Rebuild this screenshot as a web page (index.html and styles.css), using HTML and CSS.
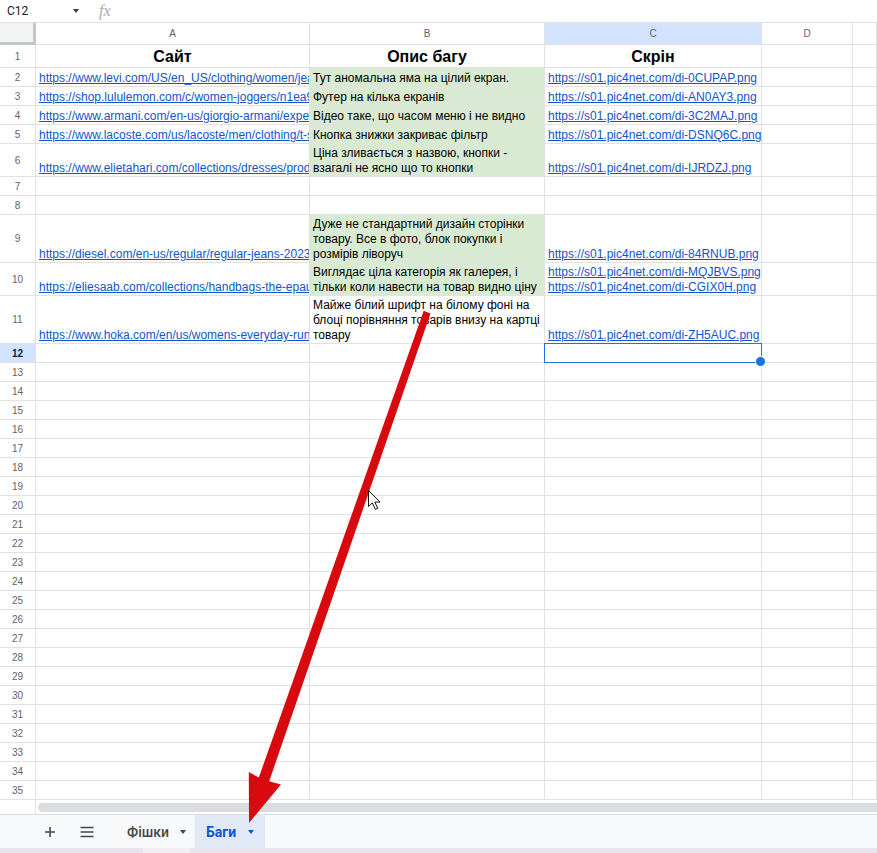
FILE: index.html
```html
<!DOCTYPE html>
<html lang="uk">
  <head>
    <meta charset="UTF-8" />
    <title>Баги — таблиця</title>
    <link rel="stylesheet" href="styles.css">
  </head>
  <body>
    <div class="app">
      <div class="toolbar">
        <div class="namebox">C12</div>
        <span class="caret dark"></span>
        <span class="fx">fx</span>
      </div>

      <div class="sheet">
        <div class="row hdr">
          <div class="corner"></div>
          <div class="ch">A</div>
          <div class="ch">B</div>
          <div class="ch active">C</div>
          <div class="ch">D</div>
          <div class="ch"></div>
        </div>
        <div class="row r1">
          <div class="rh">1</div>
          <div class="cell title">Сайт</div>
          <div class="cell title">Опис багу</div>
          <div class="cell title">Скрін</div>
          <div class="cell"></div>
          <div class="cell"></div>
        </div>
        <div class="row">
          <div class="rh">2</div>
          <div class="cell clip"><a href="#">https://www.levi.com/US/en_US/clothing/women/jeans/straight/ribcage-straight-ankle-womens-jeans</a></div>
          <div class="cell wrap green">Тут аномальна яма на цілий екран.</div>
          <div class="cell"><a href="#">https://s01.pic4net.com/di-0CUPAP.png</a></div>
          <div class="cell"></div>
          <div class="cell"></div>
        </div>
        <div class="row">
          <div class="rh">3</div>
          <div class="cell clip"><a href="#">https://shop.lululemon.com/c/women-joggers/n1ea9n</a></div>
          <div class="cell wrap green">Футер на кілька екранів</div>
          <div class="cell"><a href="#">https://s01.pic4net.com/di-AN0AY3.png</a></div>
          <div class="cell"></div>
          <div class="cell"></div>
        </div>
        <div class="row">
          <div class="rh">4</div>
          <div class="cell clip"><a href="#">https://www.armani.com/en-us/giorgio-armani/experience</a></div>
          <div class="cell wrap green">Відео таке, що часом меню і не видно</div>
          <div class="cell"><a href="#">https://s01.pic4net.com/di-3C2MAJ.png</a></div>
          <div class="cell"></div>
          <div class="cell"></div>
        </div>
        <div class="row">
          <div class="rh">5</div>
          <div class="cell clip"><a href="#">https://www.lacoste.com/us/lacoste/men/clothing/t-shirts/</a></div>
          <div class="cell wrap green">Кнопка знижки закриває фільтр</div>
          <div class="cell"><a href="#">https://s01.pic4net.com/di-DSNQ6C.png</a></div>
          <div class="cell"></div>
          <div class="cell"></div>
        </div>
        <div class="row h33">
          <div class="rh">6</div>
          <div class="cell clip"><a href="#">https://www.elietahari.com/collections/dresses/products/</a></div>
          <div class="cell wrap green">Ціна зливається з назвою, кнопки - взагалі не ясно що то кнопки</div>
          <div class="cell"><a href="#">https://s01.pic4net.com/di-IJRDZJ.png</a></div>
          <div class="cell"></div>
          <div class="cell"></div>
        </div>
        <div class="row">
          <div class="rh">7</div>
          <div class="cell"></div><div class="cell"></div><div class="cell"></div><div class="cell"></div><div class="cell"></div>
        </div>
        <div class="row">
          <div class="rh">8</div>
          <div class="cell"></div><div class="cell"></div><div class="cell"></div><div class="cell"></div><div class="cell"></div>
        </div>
        <div class="row h48">
          <div class="rh">9</div>
          <div class="cell clip"><a href="#">https://diesel.com/en-us/regular/regular-jeans-2023-d-finitive</a></div>
          <div class="cell wrap green">Дуже не стандартний дизайн сторінки товару. Все в фото, блок покупки і розмірів ліворуч</div>
          <div class="cell"><a href="#">https://s01.pic4net.com/di-84RNUB.png</a></div>
          <div class="cell"></div>
          <div class="cell"></div>
        </div>
        <div class="row h33">
          <div class="rh">10</div>
          <div class="cell clip"><a href="#">https://eliesaab.com/collections/handbags-the-epaulette</a></div>
          <div class="cell wrap green">Виглядає ціла категорія як галерея, і тільки коли навести на товар видно ціну</div>
          <div class="cell"><a href="#">https://s01.pic4net.com/di-MQJBVS.png</a><a href="#">https://s01.pic4net.com/di-CGIX0H.png</a></div>
          <div class="cell"></div>
          <div class="cell"></div>
        </div>
        <div class="row h48">
          <div class="rh">11</div>
          <div class="cell clip"><a href="#">https://www.hoka.com/en/us/womens-everyday-running-shoes/</a></div>
          <div class="cell wrap">Майже білий шрифт на білому фоні на блоці порівняння товарів внизу на картці товару</div>
          <div class="cell"><a href="#">https://s01.pic4net.com/di-ZH5AUC.png</a></div>
          <div class="cell"></div>
          <div class="cell"></div>
        </div>
        <div class="row">
          <div class="rh active">12</div>
          <div class="cell"></div><div class="cell"></div><div class="cell selected"></div><div class="cell"></div><div class="cell"></div>
        </div>
        <div class="row"><div class="rh">13</div><div class="cell"></div><div class="cell"></div><div class="cell"></div><div class="cell"></div><div class="cell"></div></div>
        <div class="row"><div class="rh">14</div><div class="cell"></div><div class="cell"></div><div class="cell"></div><div class="cell"></div><div class="cell"></div></div>
        <div class="row"><div class="rh">15</div><div class="cell"></div><div class="cell"></div><div class="cell"></div><div class="cell"></div><div class="cell"></div></div>
        <div class="row"><div class="rh">16</div><div class="cell"></div><div class="cell"></div><div class="cell"></div><div class="cell"></div><div class="cell"></div></div>
        <div class="row"><div class="rh">17</div><div class="cell"></div><div class="cell"></div><div class="cell"></div><div class="cell"></div><div class="cell"></div></div>
        <div class="row"><div class="rh">18</div><div class="cell"></div><div class="cell"></div><div class="cell"></div><div class="cell"></div><div class="cell"></div></div>
        <div class="row"><div class="rh">19</div><div class="cell"></div><div class="cell"></div><div class="cell"></div><div class="cell"></div><div class="cell"></div></div>
        <div class="row"><div class="rh">20</div><div class="cell"></div><div class="cell"></div><div class="cell"></div><div class="cell"></div><div class="cell"></div></div>
        <div class="row"><div class="rh">21</div><div class="cell"></div><div class="cell"></div><div class="cell"></div><div class="cell"></div><div class="cell"></div></div>
        <div class="row"><div class="rh">22</div><div class="cell"></div><div class="cell"></div><div class="cell"></div><div class="cell"></div><div class="cell"></div></div>
        <div class="row"><div class="rh">23</div><div class="cell"></div><div class="cell"></div><div class="cell"></div><div class="cell"></div><div class="cell"></div></div>
        <div class="row"><div class="rh">24</div><div class="cell"></div><div class="cell"></div><div class="cell"></div><div class="cell"></div><div class="cell"></div></div>
        <div class="row"><div class="rh">25</div><div class="cell"></div><div class="cell"></div><div class="cell"></div><div class="cell"></div><div class="cell"></div></div>
        <div class="row"><div class="rh">26</div><div class="cell"></div><div class="cell"></div><div class="cell"></div><div class="cell"></div><div class="cell"></div></div>
        <div class="row"><div class="rh">27</div><div class="cell"></div><div class="cell"></div><div class="cell"></div><div class="cell"></div><div class="cell"></div></div>
        <div class="row"><div class="rh">28</div><div class="cell"></div><div class="cell"></div><div class="cell"></div><div class="cell"></div><div class="cell"></div></div>
        <div class="row"><div class="rh">29</div><div class="cell"></div><div class="cell"></div><div class="cell"></div><div class="cell"></div><div class="cell"></div></div>
        <div class="row"><div class="rh">30</div><div class="cell"></div><div class="cell"></div><div class="cell"></div><div class="cell"></div><div class="cell"></div></div>
        <div class="row"><div class="rh">31</div><div class="cell"></div><div class="cell"></div><div class="cell"></div><div class="cell"></div><div class="cell"></div></div>
        <div class="row"><div class="rh">32</div><div class="cell"></div><div class="cell"></div><div class="cell"></div><div class="cell"></div><div class="cell"></div></div>
        <div class="row"><div class="rh">33</div><div class="cell"></div><div class="cell"></div><div class="cell"></div><div class="cell"></div><div class="cell"></div></div>
        <div class="row"><div class="rh">34</div><div class="cell"></div><div class="cell"></div><div class="cell"></div><div class="cell"></div><div class="cell"></div></div>
        <div class="row"><div class="rh">35</div><div class="cell"></div><div class="cell"></div><div class="cell"></div><div class="cell"></div><div class="cell"></div></div>
      </div>

      <div class="hscroll">
        <div class="hs-gutter"></div>
        <div class="hs-thumb"></div>
      </div>

      <div class="tabbar">
        <span class="tb-icon">
          <svg width="12" height="12" viewBox="0 0 12 12"><path d="M6 1v10M1 6h10" stroke="#444746" stroke-width="1.6" fill="none"/></svg>
        </span>
        <span class="tb-icon">
          <svg width="14" height="12" viewBox="0 0 14 12"><path d="M0.5 1.5h13M0.5 6h13M0.5 10.5h13" stroke="#444746" stroke-width="1.6" fill="none"/></svg>
        </span>
        <div class="tab">Фішки<span class="caret"></span></div>
        <div class="tab active">Баги<span class="caret"></span></div>
      </div>
      <div class="strip"></div>

      <!-- annotation drawn on top of the screenshot -->
      <svg class="overlay" width="877" height="853" viewBox="0 0 877 853">
        <polygon fill="#d80a0f" points="423.7,310.8 430.5,313.4 269.2,781.2 281,784.5 249,823 248.8,772 258.8,777.6"/>
        <path d="M368.5 490.5v16l3.8-3.6 3 6.4 2.4-1-2.9-6.2h5.2z" fill="#fff" stroke="#111" stroke-width="1" stroke-linejoin="round"/>
      </svg>
    </div>
  </body>
</html>
```

FILE: styles.css
```css
* {
  box-sizing: border-box;
}

body {
  margin: 0;
  font-family: "Liberation Sans", Arial, sans-serif;
  background: #fff;
}

.app {
  position: relative;
  width: 877px;
  height: 853px;
  overflow: hidden;
  background: #fff;
}

/* formula bar */
.toolbar {
  height: 23px;
  display: flex;
  align-items: center;
  border-bottom: 1px solid #e1e1e1;
  font-family: Roboto, "Liberation Sans", sans-serif;
  font-size: 12px;
  color: #202124;
}

.namebox {
  width: 73px;
  padding-left: 7px;
}

.caret {
  display: inline-block;
  width: 0;
  height: 0;
  border-left: 3.5px solid transparent;
  border-right: 3.5px solid transparent;
  border-top: 4px solid #444746;
}

.caret.dark {
  border-top-color: #3c4043;
}

.fx {
  margin-left: 20px;
  font-family: "Liberation Serif", serif;
  font-style: italic;
  font-size: 16px;
  color: #a8acb0;
}

/* grid */
.sheet {
  height: 777px;
  overflow: hidden;
}

.row {
  display: grid;
  grid-template-columns: 36px 274px 235px 217px 91px 24px;
  height: 19px;
}

.row.hdr {
  height: 22px;
}

.row.r1 {
  height: 23px;
}

.row.h33 {
  height: 33px;
}

.row.h48 {
  height: 48px;
}

.row > div {
  border-right: 1px solid #e2e2e2;
  border-bottom: 1px solid #e2e2e2;
}

.corner {
  background: #f1f3f4;
  border-right: 3px solid #c4c7c5 !important;
  border-bottom: 3px solid #c4c7c5 !important;
}

.ch,
.rh {
  display: flex;
  align-items: center;
  justify-content: center;
  font-size: 10px;
  color: #5f6368;
}

.ch.active,
.rh.active {
  background: #d3e3fd;
}

.rh.active {
  font-weight: bold;
  color: #041e49;
}

.cell {
  display: flex;
  flex-direction: column;
  justify-content: flex-end;
  padding: 0 3px;
  font-size: 12px;
  line-height: 15px;
  color: #000;
  white-space: nowrap;
}

.cell a {
  color: #1155cc;
  text-decoration: underline;
}

.cell.clip {
  overflow: hidden;
}

.cell.wrap {
  white-space: normal;
}

.cell.green {
  background: #d9ead3;
}

.cell.title {
  align-items: center;
  padding-bottom: 1px;
  font-size: 16px;
  line-height: 19px;
  font-weight: bold;
}

.cell.selected {
  position: relative;
}

.cell.selected::after {
  content: "";
  position: absolute;
  left: -1px;
  top: -1px;
  right: -1px;
  bottom: -1px;
  border: 1.5px solid #1a73e8;
}

.cell.selected::before {
  content: "";
  position: absolute;
  right: -5px;
  bottom: -5px;
  width: 9px;
  height: 9px;
  border-radius: 50%;
  background: #1a73e8;
  border: 1px solid #fff;
  z-index: 1;
}

/* horizontal scrollbar */
.hscroll {
  height: 14px;
  display: flex;
}

.hs-gutter {
  width: 36px;
  border-right: 1px solid #e2e2e2;
}

.hs-thumb {
  flex: 1;
  margin: 3px 0 2px 2px;
  background: #dadce0;
  border-radius: 5px 0 0 5px;
}

/* sheet tabs */
.tabbar {
  height: 34px;
  display: flex;
  align-items: stretch;
  background: #f8f9fa;
  border-top: 1px solid #dadce0;
  font-family: Roboto, "Liberation Sans", sans-serif;
  font-size: 14px;
}

.tb-icon {
  width: 24px;
  display: flex;
  align-items: center;
  justify-content: center;
  margin-left: 38px;
}

.tb-icon + .tb-icon {
  margin-left: 13px;
}

.tab {
  display: flex;
  align-items: center;
  padding-left: 14px;
  width: 82px;
  font-weight: 500;
  color: #444746;
}

.tb-icon + .tb-icon + .tab {
  margin-left: 14px;
}

.tab .caret {
  margin-left: 11px;
}

.tab.active {
  width: 70px;
  padding-left: 11px;
  background: #e1e9f7;
  font-weight: 700;
  color: #0b57d0;
}

.tab.active .caret {
  margin-left: 12px;
  border-top-color: #0b57d0;
}

.strip {
  height: 5px;
  background: linear-gradient(90deg, #e8e3ec 0, #e8e3ec 143px, #f2eff4 143px, #f2eff4 190px, #e9e5ee 190px);
}

.overlay {
  position: absolute;
  left: 0;
  top: 0;
  pointer-events: none;
}
```
